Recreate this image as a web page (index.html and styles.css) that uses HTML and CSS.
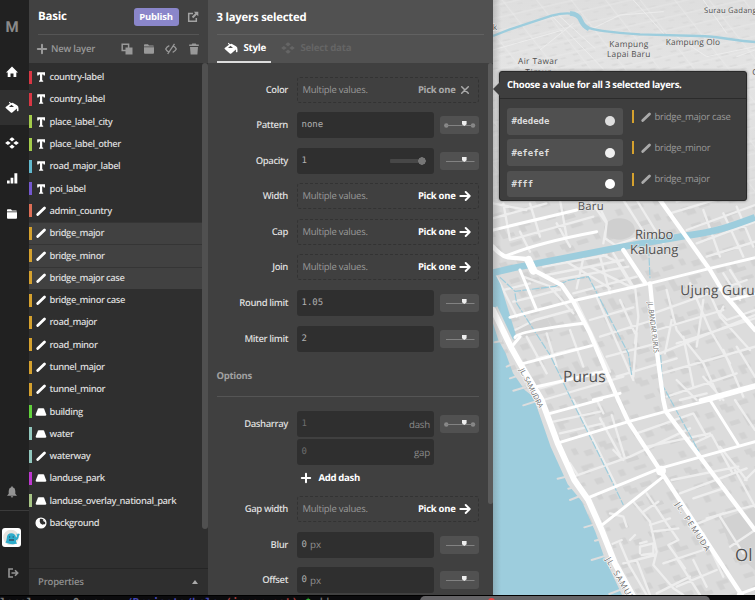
FILE: index.html
```html
<!DOCTYPE html>
<html lang="en">
<head>
<meta charset="utf-8">
<title>Basic</title>
<link rel="stylesheet" href="styles.css">
</head>
<body>
<svg class="defs" aria-hidden="true">
  <symbol id="text" viewBox="0 0 12 12"><path d="M2.200 1.300h7.800v3.200H8.700l-.4-1H7.200v5.800l1 .4v1.100H4v-1.100l1-.4V3.500H3.900l-.4 1H2.200z"/></symbol>
  <symbol id="line" viewBox="0 0 12 12"><path d="M2.700 9.600 9.500 2.900" stroke="currentColor" stroke-width="2.800" stroke-linecap="round"/></symbol>
  <symbol id="fill" viewBox="0 0 12 12"><path d="M3.700 2.200h4.600q.6 0 .8.500L11.300 8.600q.3 1.100-.9 1.100H1.600Q.4 9.700.7 8.600L2.900 2.700q.2-.5.8-.5z"/></symbol>
  <symbol id="globe" viewBox="0 0 12 12"><circle cx="6" cy="6" r="4.900" stroke="currentColor" stroke-width="1.300" fill="none"/><path d="M1 6a5 5 0 0 1 4-4.900L4.700 4.500l.8 2 2 1.200L9.300 7l1.200 1.200A5 5 0 0 1 1 6"/><path d="M7.800 2l2 1.500.3 1.500-1.600-.8z"/></symbol>
  <symbol id="bucket" viewBox="0 0 14 12"><path fill-rule="evenodd" d="M4.600.8 6 2.200 7.600 1.800 12 4.200q1.600.8 1.500 3.300v2.200q-.8 1.200-1.600 0V7.400L7.300 11.400q-.8.500-1.500 0L.7 7q-.4-.5 0-1L5 2.700 3.900 1.600zM4 6h5L6.500 3.700z"/></symbol>
  <symbol id="data" viewBox="0 0 14 12"><path d="M7 .2 9.700 2.300 7 4.400 4.300 2.300zM7 7.600l2.700 2.100L7 11.800 4.300 9.700zM2.900 3.900 5.700 6 2.900 8.100.1 6zM11.100 3.900 13.900 6l-2.800 2.100L8.300 6z"/></symbol>
  <symbol id="folder" viewBox="0 0 12 12"><path d="M1 2q0-.8.8-.8H5l1 1.300h4q.9 0 .9.900H1zM1 4.200h10v5.600q0 .9-.9.900H1.900q-.9 0-.9-.9z"/></symbol>
  <symbol id="plus" viewBox="0 0 12 12"><path d="M6 1.800v8.400M1.800 6h8.400" stroke="currentColor" stroke-width="2" stroke-linecap="round"/></symbol>
  <symbol id="arrow" viewBox="0 0 12 12"><path d="M1.300 6h9M6.700 2l4 4-4 4" fill="none" stroke="currentColor" stroke-width="1.900" stroke-linecap="round" stroke-linejoin="round"/></symbol>
  <symbol id="close" viewBox="0 0 12 12"><path d="M2.700 2.700l6.600 6.600M9.300 2.700l-6.600 6.600" stroke="currentColor" stroke-width="1.500" stroke-linecap="round"/></symbol>
  <symbol id="slider" viewBox="0 0 39 18"><path d="M6 9.500h28.500" stroke="#828282"/><path d="M22 5h4.600v3.200L24.300 10 22 8.200z" fill="#eee"/></symbol>
  <symbol id="stops" viewBox="0 0 39 18"><circle cx="6.300" cy="9.500" r="2.200" fill="#898989"/><circle cx="33" cy="9.500" r="2.200" fill="#898989"/><use href="#slider"/></symbol>
</svg>

<div class="app">
  <nav class="rail">
    <div class="brand">M</div>
    <a class="tab"><svg class="i14" viewBox="0 0 14 14"><path d="M7 1.500 13 7.500h-1.700V12H8.500V8.500h-3V12H2.700V7.500H1z"/></svg></a>
    <a class="tab on"><svg class="i14"><use href="#bucket"/></svg></a>
    <a class="tab"><svg class="i14"><use href="#data"/></svg></a>
    <a class="tab"><svg class="i14" viewBox="0 0 14 14"><path d="M2 9.500h2.700v3H2zM5.600 6.800h2.700v5.700H5.600zM9.400 2.200h2.900v10.300H9.400z"/></svg></a>
    <a class="tab"><svg class="i12"><use href="#folder"/></svg></a>
    <div class="rail-end">
      <svg class="i12 bell" viewBox="0 0 12 12"><path d="M6 .3q.8 0 .8.9Q9.300 1.900 9.300 5v2.700L11 9.700H1l1.700-2V5q0-3.100 2.500-3.800 0-.9.8-.9zM4.700 10.300h2.600Q7 11.600 6 11.600t-1.300-1.300z"/></svg>
      <div class="avatar"><svg viewBox="0 0 19 19"><circle cx="9" cy="9.500" r="7.800" fill="#e6e3de"/><path d="M3.500 14.500Q4.500 13 4.800 10 5 5.500 9.300 5.300q4.200.2 4.700 4.200 1.200-.3 1-2l-.6-1.700h1l.5.900.4-1.200 1 .2.500 1.200-.9.600q-.2 4-2.900 4.800V14l1.200 1.500q-5.700 2-11.700-1z" fill="#2eaccb"/><circle cx="7.600" cy="9" r=".7" fill="#255a75"/><circle cx="11.200" cy="9" r=".7" fill="#255a75"/><path d="M7 11h5v2H7z" fill="#34677f"/></svg></div>
      <svg class="i12 exit" viewBox="0 0 12 12"><path d="M6 2H2v8h4M4.500 6h6M8 3.300 10.700 6 8 8.700" fill="none" stroke="currentColor" stroke-width="1.600"/></svg>
    </div>
  </nav>

  <aside class="sidebar">
    <header class="side-head">
      <div class="title-row"><h1>Basic</h1><button class="publish">Publish</button>
        <svg class="i12" viewBox="0 0 12 12"><path d="M6 2.500H1.700v7.800h7.600V7" fill="none" stroke="currentColor" stroke-width="1.500"/><path d="M6.800.8h4.500v4.500L9.700 3.800 6.300 7.300 4.800 5.800 8.300 2.300z"/></svg></div>
      <div class="tools"><svg class="i12"><use href="#plus"/></svg><span>New layer</span>
        <svg class="i12" viewBox="0 0 12 12"><path d="M1.200 1.200h6.400v6.400H1.200z" fill="none" stroke="currentColor" stroke-width="1.500"/><path d="M4.500 4.500h7v7h-7z"/></svg>
        <svg class="i12"><use href="#folder"/></svg>
        <svg class="i12" viewBox="0 0 12 12"><path d="M4.300 2.700Q1.800 3.800.7 6q1 2 3 3M7.700 9.300q2.500-1 3.600-3.300-1-2-3-3M9.500.9 2.700 11" fill="none" stroke="currentColor" stroke-width="1.300"/></svg>
        <svg class="i12" viewBox="0 0 12 12"><path d="M4.200.5h3.600l.5 1h2.500v1.400H1.200V1.500h2.500zM2 3.900h8l-.6 7.600H2.600z"/></svg></div>
    </header>
    <div class="layers">
      <ul>
        <li class="red"><svg><use href="#text"/></svg>country-label</li>
        <li class="red"><svg><use href="#text"/></svg>country_label</li>
        <li class="lime"><svg><use href="#text"/></svg>place_label_city</li>
        <li class="lime"><svg><use href="#text"/></svg>place_label_other</li>
        <li class="cyan"><svg><use href="#text"/></svg>road_major_label</li>
        <li class="violet"><svg><use href="#text"/></svg>poi_label</li>
        <li class="coral"><svg><use href="#line"/></svg>admin_country</li>
        <li class="gold sel"><svg><use href="#line"/></svg>bridge_major</li>
        <li class="gold sel"><svg><use href="#line"/></svg>bridge_minor</li>
        <li class="gold sel"><svg><use href="#line"/></svg>bridge_major case</li>
        <li class="gold"><svg><use href="#line"/></svg>bridge_minor case</li>
        <li class="gold"><svg><use href="#line"/></svg>road_major</li>
        <li class="gold"><svg><use href="#line"/></svg>road_minor</li>
        <li class="gold"><svg><use href="#line"/></svg>tunnel_major</li>
        <li class="gold"><svg><use href="#line"/></svg>tunnel_minor</li>
        <li class="green"><svg><use href="#fill"/></svg>building</li>
        <li class="aqua"><svg><use href="#fill"/></svg>water</li>
        <li class="aqua"><svg><use href="#line"/></svg>waterway</li>
        <li class="magenta"><svg><use href="#fill"/></svg>landuse_park</li>
        <li class="olive"><svg><use href="#fill"/></svg>landuse_overlay_national_park</li>
        <li><svg><use href="#globe"/></svg>background</li>
      </ul>
      <div class="thumb"></div>
    </div>
    <footer>Properties<span class="caret"></span></footer>
  </aside>

  <section class="panel">
    <header class="panel-head">
      <h2>3 layers selected</h2>
      <div class="tabs"><a class="active"><svg class="i14"><use href="#bucket"/></svg>Style</a><a class="off"><svg class="i14"><use href="#data"/></svg>Select data</a></div>
    </header>
    <div class="panel-body">
      <div class="form">
        <div class="row"><label>Color</label><div class="multi dim">Multiple values.<b>Pick one</b><svg><use href="#close"/></svg></div></div>
        <div class="row"><label>Pattern</label><div class="field">none</div><svg class="fn"><use href="#stops"/></svg></div>
        <div class="row"><label>Opacity</label><div class="field">1<i class="range"></i></div><svg class="fn"><use href="#slider"/></svg></div>
        <div class="row"><label>Width</label><div class="multi">Multiple values.<b>Pick one</b><svg><use href="#arrow"/></svg></div></div>
        <div class="row"><label>Cap</label><div class="multi">Multiple values.<b>Pick one</b><svg><use href="#arrow"/></svg></div></div>
        <div class="row"><label>Join</label><div class="multi">Multiple values.<b>Pick one</b><svg><use href="#arrow"/></svg></div></div>
        <div class="row"><label>Round limit</label><div class="field">1.05</div><svg class="fn"><use href="#slider"/></svg></div>
        <div class="row"><label>Miter limit</label><div class="field">2</div><svg class="fn"><use href="#slider"/></svg></div>
        <h3>Options</h3>
        <div class="row dash"><label>Dasharray</label><div class="field faint">1<span>dash</span></div><svg class="fn"><use href="#stops"/></svg></div>
        <div class="row dash2"><label></label><div class="field faint">0<span>gap</span></div></div>
        <div class="add"><svg class="i12"><use href="#plus"/></svg>Add dash</div>
        <div class="row"><label>Gap width</label><div class="multi">Multiple values.<b>Pick one</b><svg><use href="#arrow"/></svg></div></div>
        <div class="row"><label>Blur</label><div class="field">0 <em>px</em></div><svg class="fn"><use href="#slider"/></svg></div>
        <div class="row"><label>Offset</label><div class="field">0 <em>px</em></div><svg class="fn"><use href="#slider"/></svg></div>
      </div>
      <div class="thumb"></div>
    </div>
  </section>

  <main class="map">
    <svg class="canvas" viewBox="9 0 786 1785" preserveAspectRatio="none">
      <defs>
        <linearGradient id="haze" x2="0" y2="1"><stop offset="0" stop-color="#dedede"/><stop offset=".12" stop-color="#e4e4e4"/><stop offset=".35" stop-color="#dcdcdc"/></linearGradient>
        <linearGradient id="edge"><stop offset="0" stop-color="#555" stop-opacity=".25"/><stop offset="1" stop-color="#555" stop-opacity="0"/></linearGradient>
        <pattern id="blocks" width="190" height="150" patternUnits="userSpaceOnUse" patternTransform="rotate(-17) skewX(12)">
          <path d="M12 14h22v12h14v16H20V30h-8zM62 18h34v14H62zM118 10h16v20h-16zM150 26h24v18h-24zM14 70h30v14H14zM60 62h18v24h20v12H60zM120 68h36v12h-20v16h-16zM22 112h18v20H22zM70 116h36v12H70zM136 116h24v18h-24z" fill="#d2d2d2"/>
        </pattern>
        <pattern id="far" width="90" height="38" patternUnits="userSpaceOnUse" patternTransform="rotate(-13) skewX(25)">
          <path d="M5 5h18v5H5zM40 12h22v5H40zM14 24h16v5H14zM64 28h16v4H64z" fill="#dadada"/><path d="M0 19h90M32 0v38" stroke="#ebebeb" stroke-width="1.500"/>
        </pattern>
      </defs>
      <path d="M9 0h786v1785H9z" fill="url(#haze)"/>
      <path d="M9 0h786v600H9z" fill="url(#far)"/>
      <path d="M9 600h786v1185H9z" fill="url(#blocks)"/>
      <ellipse cx="388" cy="687" rx="46" ry="32" fill="#cfcfcf"/>
      <path d="M80 980l90-26 20 40-90 20zM690 1560l105-40v190l-70-60z" fill="#d2d2d2"/>
      <g class="minor">
        <path d="M9 655l160-45M60 720l250-70M120 610l30 100M210 600l20 110M300 600l50 70-10 60M400 600l70 110M330 625l20 40-5 50 30 20 60-20M440 600l80 130M540 640l200-60M590 690l205-75M620 730l175-65M650 770l145-45M700 640l60 130M640 630l50 140M560 605l60-20M740 620l50 120M9 610l100 20M40 610l20 110M90 695l30 60M200 670l40 70"/>
        <path d="M160 800l190-35M170 825l230-45M200 840l215-40M250 880l190-50M280 775l-20 90M330 770l30 110M230 785l130 80M300 800l120 60M370 760l60 100M340 765l40 20 50 80M20 830l60 120M40 870l80-20M70 905l50-12 90-25M100 830l110 40M180 860l70 80M75 990l60-30 110-30M110 1010l60 110M170 1000l30 100M240 990l40 110M140 1075l120-30"/>
        <path d="M260 905l100 210M320 890l110 250M300 960l130-38M330 1010l160-50M350 1070l150-40M380 1130l180-55M390 900l45 100M435 860l10 90-10 80M440 1000l-10 130M490 940l280-100M500 990l200-60M510 1060l285-115M515 1120l280-80M530 1190l210-70M530 870l30 120 80 100 50 110M600 850l60 140 60 100M545 960l-20 100M580 1010l30 150M640 900l-20 140M650 860l40 90 90 100M700 820l50 80M720 810l45 70M560 1140l60 60M560 1030l235-75M640 1130l60 70M700 1050l60 140M700 920l-10 20 20 20 85-30M570 1200l80-20M740 1040l55 90"/>
        <path d="M150 1165l170-50M160 1200l240-70M250 1430l170-60 180-85M190 1265l140-30M210 1300l130-30M320 1200l20 40M330 1255l60 110M365 1245l40 130M370 1350l30 30M440 1300l170-60 40 70M470 1340l190-40M250 1200l130 260M260 1420l-20-30M600 1335l65-30 60 110M690 1340l80 100M545 1440l200-40M570 1480l200-75M610 1495l90-30M650 1555l145-40M690 1550l70 110M720 1640l75-50M735 1410l60 110M795 1410l-30 30M735 1200l60 90"/>
        <path d="M430 1505l50 60 20 90-10 40 60 70 30 20M460 1535l45-30M480 1575l60-20M360 1540l40 10 10 30M470 1480l60 90 35 50-30 15 50 70M390 1630l30 70 50 85M360 1635l35-15M400 1690l95-25M440 1680l40 105M520 1690l120-40M560 1675l70 110M500 1780l100-50M610 1680l40 80M485 1595l80-10M450 1630l20-5M420 1620l15-15M450 1660v-20l40-10v30l-35 5M560 1760l120-50M640 1600l60 130M600 1580l100-40"/>
      </g>
      <g class="fine"><path d="M185 47l155 160M205 45l110 100M9 150l210-60M430 0l90 100M560 110l90 60 145-30M640 0l70 100M300 90l90-45 130-10M740 170l55-20M150 150l100-80"/></g>
      <path d="M9 810l22 42 46 150-17 42-51-112z" class="water"/>
      <path d="M9 970l16 50 22 40 22 60 35 50 32 25 16 55 48 95 36 90 40 70 40 90 28 80 52 110H9z" class="water"/>
      <path d="M9 108 60 88l125-41q40-10 65-5c25 5 15 26 40 39 18 10 80 17 160 22l175 5c70 1 100 14 170 18" class="river r1"/>
      <path d="M240 40q25 2 32 20t25 27" class="river r3"/>
      <path d="M9 818 70 804 390 742 590 707C680 695 720 680 795 652" class="river r2"/>
      <path d="M30 832l45 42 120-15 40-18 60-11 70 135 50 95 10 65M75 880l5 30 100 155 65 135 85 170 70 145M476 745l4 90M512 1065l5 90 110 200" class="stream"/>
      <path d="M100 1216l50-16M203 1436l50-12M235 1466l35-8M240 1500l45-18M283 1582l40-12M315 1622l30-8M305 1680l65-20M358 1782l65-25M14 1027l20-4M50 1100l25-12M60 1135l30-10M70 1172l35-10" class="minor pier"/>
      <path d="M9 925l56 118 25 52 60 110 45 130 50 110 50 60 40 90 40 100 55 95" class="beach"/>
      <g class="major">
        <path d="M9 930l56 115 25 45 65 110 48 130 50 110 42 60 40 90 40 100 55 100" class="w18"/>
        <path d="M9 740q24 28 45 32l55 5q16 2 21 33l85 45 35 50 50 95 85 200 30 65 95 145 245 375" class="w14"/><path d="M115 780l15 32" class="w24"/>
        <path d="M510 600l150 210 45 75 90 105M400 750l65 98M480 850l20 200 20 150 8 35 267 355" class="w14"/>
        <path d="M60 952l190-50 230-52 180-45 135-32M75 1012q8-18 205-42M65 1040l25-30M90 1093l215-56M90 810l50 120M9 690l251-60M50 767q90-38 270-72M170 1243l165-45M200 1330l215-65 110-30 135-35 135-38M660 1200l85 135M510 1405l125-35 160-45M290 1495l220-90M330 1580l190-150M720 900l75-18M630 1200l165-46M745 1783l50-18M310 1200l80-20M140 1160l200-45"/>
        <circle cx="513" cy="1412" r="15" fill="#fff" stroke="none"/>
      </g>
      <path d="M9 0h24v1785H9z" fill="url(#edge)"/>
      <g class="label">
        <text x="642" y="38" font-size="23" textLength="158">Surau Gadang</text>
        <text x="358" y="140" font-size="25" textLength="117">Kampung</text><text x="351" y="171" font-size="25" textLength="130">Lapai Baru</text>
        <text x="527" y="136" font-size="25" textLength="163">Kampung Olo</text>
        <text x="84" y="193" font-size="25" textLength="119">Air Tawar</text><text x="106" y="224" font-size="25" textLength="77">Timur</text>
        <text x="8" y="90" font-size="25">k</text><text x="787" y="225" font-size="25">G</text>
        <text x="263" y="629" font-size="34" textLength="78">Baru</text>
        <text x="435" y="716" font-size="39" textLength="115">Rimbo</text><text x="420" y="763" font-size="39" textLength="145">Kaluang</text>
        <text x="571" y="884" font-size="41" textLength="223">Ujung Guru</text>
        <text x="219" y="1147" font-size="47" textLength="128">Purus</text>
        <text x="735" y="1683" font-size="51">Ol</text>
      </g>
      <g class="street">
        <text transform="translate(473 907) rotate(83)" font-size="22" textLength="153" lengthAdjust="spacingAndGlyphs">JL. BANDAR PURUS</text>
        <text transform="translate(88 1110) rotate(63)" font-size="22" textLength="130" lengthAdjust="spacingAndGlyphs">JL. SAMUDRA</text>
        <text transform="translate(555 1513) rotate(57)" font-size="24" textLength="170">JL. PEMUDA</text>
        <text transform="translate(346 1678) rotate(60)" font-size="25" textLength="185">JL. SAMUDRA</text>
      </g>
    </svg>
    <div class="popup">
      <h4>Choose a value for all 3 selected layers.</h4>
      <div class="choices">
        <div class="choice"><button>#dedede<i class="c1"></i></button><span class="src"><svg><use href="#line"/></svg>bridge_major case</span></div>
        <div class="choice"><button>#efefef<i class="c2"></i></button><span class="src"><svg><use href="#line"/></svg>bridge_minor</span></div>
        <div class="choice"><button>#fff<i class="c3"></i></button><span class="src"><svg><use href="#line"/></svg>bridge_major</span></div>
      </div>
    </div>
  </main>
</div>
<div class="terminal"><pre><span>local ruan</span> Qruan  <span class="blue">~/Projects/hola</span> <span class="redt">(inner-cat)</span> <span class="greent">$</span> ||</pre><div class="window"><i></i></div></div>
</body>
</html>
```
FILE: styles.css
```css
* { box-sizing: border-box; }
body { margin: 0; width: 755px; height: 600px; overflow: hidden; background: #0b0b0d; font: 600 9.400px/14px "Open Sans", sans-serif; color: #ddd; text-rendering: geometricPrecision; }
svg { display: block; flex: none; fill: currentColor; }
h1, h2, h3, h4, ul { margin: 0; padding: 0; }
h1, h2 { font-weight: 700; color: #fff; }
button { border: 0; padding: 0; color: inherit; }
.defs { position: absolute; width: 0; height: 0; }
.i12 { width: 12px; height: 12px; }
.i14 { width: 14px; height: 14px; }
.app { display: flex; height: 595px; }

.rail { width: 29px; flex: none; background: #212121; display: flex; flex-direction: column; color: #fff; }
.brand { height: 54px; padding: 17px 0 0 5.500px; font: 700 15px/20px Roboto, sans-serif; color: #8a8a8a; }
.tab { height: 35.500px; padding-right: 6px; display: flex; align-items: center; justify-content: center; }
.tab.on { background: #303030; }
.rail-end { margin-top: auto; height: 109px; display: flex; flex-direction: column; align-items: center; padding-right: 6px; color: #949494; }
.avatar { width: 29px; margin: 12px -6px 0 0; height: 54px; border-top: 1px solid #3b3b3b; padding: 17px 0 0 2px; }
.avatar svg { width: 19px; height: 19px; background: #fff; border-radius: 3px; }
.exit { margin: 3px -2px 0 0; }

.sidebar { width: 178.500px; flex: none; display: flex; flex-direction: column; background: #2f2f2f; }
.side-head { height: 62.500px; background: #414141; padding: 0 8px 0 9px; color: #a3a3a3; }
.title-row { height: 35px; border-bottom: 1px solid #555; display: flex; align-items: center; margin-right: 1px; }
.title-row h1 { flex: 1; font-size: 11.500px; letter-spacing: -.200px; }
.publish { width: 45px; height: 18px; border-radius: 3px; background: #8a86ca; color: #fff; font: 700 9.500px/18px "Open Sans", sans-serif; letter-spacing: -.200px; margin-right: 8px; }
.tools { height: 28px; display: flex; align-items: center; font-size: 9.500px; letter-spacing: -.200px; color: #999; }
.tools span { flex: 1; margin-left: 3px; }
.tools svg + svg { margin-left: 10.200px; }
.tools > :first-child { margin-left: -2px; }
.layers { flex: 1; display: flex; padding-top: 3.500px; }
.layers ul { list-style: none; flex: 1; min-width: 0; font-size: 9.400px; letter-spacing: -.430px; white-space: nowrap; color: #d8d8d8; }
.layers li { height: 22.300px; display: flex; align-items: center; gap: 3px; --c: transparent; }
.layers li::before { content: ""; width: 2.500px; height: 13px; background: var(--c); }
.layers li svg { width: 12px; height: 12px; color: #fff; }
.layers li.sel { background: #414141; box-shadow: inset 0 1px #353535; }
.layers .red { --c: #d83744; }
.layers .lime { --c: #a4cc4b; }
.layers .cyan { --c: #62b9ce; }
.layers .violet { --c: #7558cf; }
.layers .coral { --c: #de6e55; }
.layers .gold { --c: #d5a12e; }
.layers .green { --c: #61d13b; }
.layers .aqua { --c: #91c7bd; }
.layers .magenta { --c: #bd37cf; }
.layers .olive { --c: #a7c585; }
.thumb { flex: none; width: 5.500px; border-radius: 3px; background: #505050; }
.layers .thumb { height: 466px; margin: -3.500px 0 0; }
.sidebar footer { height: 27px; border-top: 1px solid #252525; display: flex; align-items: center; justify-content: space-between; padding: 0 10px 0 9px; font-size: 9.500px; letter-spacing: -.200px; color: #8f8f8f; }
.caret { border: 3px solid transparent; border-top: 0; border-bottom: 4px solid #aaa; }

.panel { width: 285.500px; flex: none; background: #404040; }
.panel-head { height: 62.500px; background: #515151; padding: 0 9px; }
.panel-head h2 { height: 35px; line-height: 35px; font-size: 11.300px; letter-spacing: -.200px; border-bottom: 1px solid #616161; }
.tabs { display: flex; height: 28px; font-weight: 700; font-size: 9.700px; letter-spacing: -.250px; color: #fff; }
.tabs a { display: flex; align-items: center; gap: 6px; height: 28px; padding: 0 5px 0 7px; border-bottom: 2px solid transparent; }
.tabs .active { width: 54px; border-color: #ddd; }
.tabs .off { color: #656565; margin-left: 3px; }
.panel-body { height: 532.500px; display: flex; overflow: hidden; }
.panel-body .thumb { height: 441px; background: #5b5b5b; }
.form { width: 280px; padding: 14px 9px 0; }
.row { display: flex; align-items: center; height: 26px; margin-bottom: 9.600px; }
.row label { width: 80.500px; padding-right: 9px; text-align: right; font-size: 9.500px; letter-spacing: -.400px; color: #ddd; flex: none; }
.multi { width: 182px; height: 26px; border: 1px dashed #333; border-radius: 3px; display: flex; align-items: center; padding: 0 7px 0 4.500px; font-weight: 400; font-size: 9.500px; letter-spacing: -.250px; color: #999; }
.multi b { margin-left: auto; margin-right: 3px; color: #fff; font-weight: 700; font-size: 9.500px; letter-spacing: -.280px; }
.multi svg { width: 12px; height: 12px; color: #fff; }
.multi.dim b, .multi.dim svg { color: #aaa; }
.field { width: 137px; height: 26px; border-radius: 3px; background: #2f2f2f; padding: 0 4px 0 4.500px; display: flex; align-items: center; font: 400 9px "DejaVu Sans Mono", monospace; color: #b0b0b0; }
.field em { font: 400 9.800px "Open Sans", sans-serif; color: #909090; margin-left: 3px; }
.field.faint { color: #6d6d6d; }
.field span { margin-left: auto; font: 400 9.700px "Open Sans", sans-serif; letter-spacing: -.200px; color: #8a8a8a; }
.range { margin-left: auto; margin-right: 4px; width: 36px; height: 8px; border-radius: 4px; background: radial-gradient(circle at 32px 4px, #777 3.500px, transparent 4px), linear-gradient(#474747, #474747) 0 2px / 34px 4px no-repeat; }
.fn { width: 39px; height: 18px; margin-left: 5.500px; border-radius: 3px; background: #515151; }
.form h3 { height: 36px; margin-bottom: 14px; padding-top: 8px; border-bottom: 1px solid #555; font-size: 9.500px; letter-spacing: -.300px; line-height: 14px; color: #a0a0a0; }
.row.dash { margin-bottom: 2px; }
.row.dash2 { margin-bottom: 6px; }
.add { height: 14px; display: flex; align-items: center; gap: 7px; margin: 0 0 11px 83px; color: #fff; font-weight: 700; font-size: 9.600px; letter-spacing: -.350px; }

.map { flex: 1; position: relative; overflow: hidden; }
.canvas { width: 262px; height: 595px; }
.minor, .fine { fill: none; stroke: #eee; stroke-width: 7; stroke-linejoin: round; stroke-linecap: round; }
.fine { stroke-width: 2.500; }
.pier { stroke-width: 6; stroke: #ddd; }
.water { fill: #9dcddd; }
.river { fill: none; stroke: #9dcddd; }
.r1 { stroke-width: 7; }
.r2 { stroke-width: 20; }
.r3 { stroke-width: 14; }
.stream { fill: none; stroke: #9dcddd; stroke-width: 3.500; stroke-dasharray: 24 4; }
.beach { fill: none; stroke: #dedede; stroke-width: 28; }
.major { fill: none; stroke: #fff; stroke-width: 9; stroke-linejoin: round; stroke-linecap: round; }
.w14 { stroke-width: 13; }
.w18 { stroke-width: 18; }
.w24 { stroke-width: 24; }
.label, .street { fill: #505050; font-family: "Open Sans", sans-serif; font-weight: 400; paint-order: stroke; stroke: #e4e4e4; stroke-width: 4; stroke-linejoin: round; }
.street { fill: #666; stroke: #fff; }

.popup { position: absolute; left: 5.500px; top: 71px; width: 248px; height: 130px; background: #3e3e3e; border: 1px solid #292929; border-radius: 3px; box-shadow: 0 0 3px rgba(0, 0, 0, .5); }
.popup::before { content: ""; position: absolute; left: -7px; top: 10px; border: 7px solid transparent; border-left: 0; border-right-color: #3e3e3e; }
.popup h4 { height: 27px; border-bottom: 1px solid #2b2b2b; padding-left: 7.500px; font-size: 9.600px; letter-spacing: -.300px; line-height: 26px; font-weight: 700; color: #fff; }
.choices { display: flex; flex-direction: column; gap: 4.800px; padding: 9px 7.500px; }
.choice { display: flex; height: 26.500px; }
.choice button { width: 116px; flex: none; border-radius: 3px; background: #505050; display: flex; align-items: center; justify-content: space-between; padding: 0 8.500px 0 4.500px; font: 700 9px "DejaVu Sans Mono", monospace; color: #ddd; }
.choice i { width: 10px; height: 10px; border-radius: 50%; }
.c1 { background: #dedede; }
.c2 { background: #efefef; }
.c3 { background: #fff; }
.src { display: flex; align-items: center; height: 13px; margin: 2px 0 0 9px; border-left: 2.500px solid #d5a12e; padding-left: 5.500px; gap: 3px; font-size: 9.500px; letter-spacing: -.280px; white-space: nowrap; font-weight: 400; color: #999; }
.src svg { width: 12px; height: 12px; color: #aaa; }

.terminal { height: 5px; overflow: hidden; display: flex; justify-content: space-between; border-top: 1px solid #000; }
.terminal pre { margin: 0; font: 700 11px/13px "DejaVu Sans Mono", monospace; color: #777; white-space: pre; }
.blue { color: #4547b5; }
.redt { color: #a13a3a; }
.greent { color: #3a3; }
.window { width: 290px; margin-right: 45px; flex: none; height: 20px; border-radius: 5px; background: #656467; padding: 2px 0 0 68px; }
.window i { display: block; width: 7px; height: 7px; border-radius: 50%; background: #e44; }
```
